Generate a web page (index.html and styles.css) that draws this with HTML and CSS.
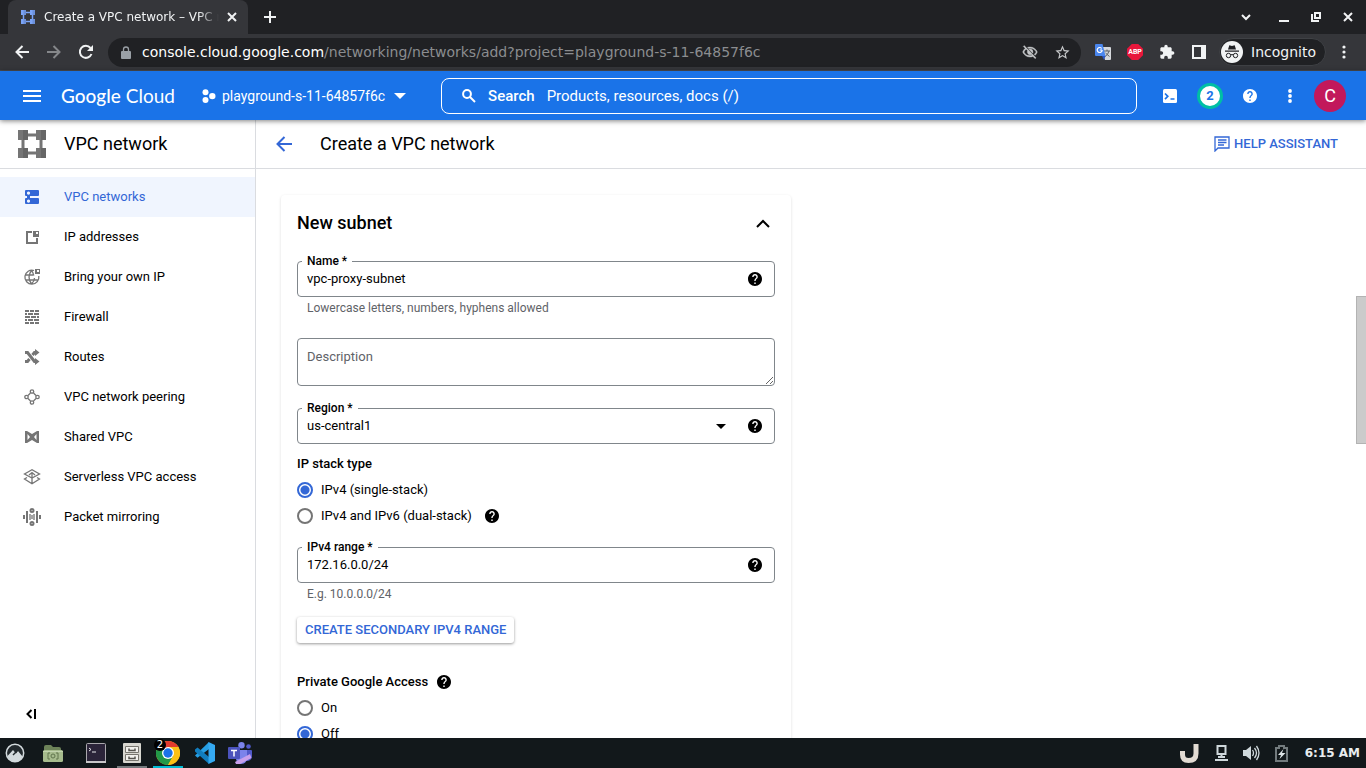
FILE: index.html
```html
<!DOCTYPE html>
<html lang="en">
<head>
<meta charset="utf-8">
<title>Create a VPC network – VPC network</title>
<link rel="stylesheet" href="styles.css">
</head>
<body>
<svg class="sprite" aria-hidden="true">
  <symbol id="help" viewBox="2 2 20 20"><path d="M12 2C6.480 2 2 6.480 2 12s4.480 10 10 10 10-4.480 10-10S17.520 2 12 2zm1 17h-2v-2h2v2zm2.070-7.750l-.9.920C13.450 12.900 13 13.500 13 15h-2v-.5c0-1.100.450-2.100 1.170-2.830l1.240-1.260c.370-.360.590-.860.590-1.410 0-1.100-.9-2-2-2s-2 .9-2 2H8c0-2.210 1.790-4 4-4s4 1.790 4 4c0 .880-.360 1.680-.930 2.250z" stroke="none"/></symbol>
  <symbol id="vpc" viewBox="0 0 28 28"><path d="M10 5h8M10 23h8M5 10v8M23 10v8" stroke="currentColor" stroke-width="3"/><path d="M0 0h10v10H0zM18 0h10v10H18zM0 18h10v10H0zM18 18h10v10H18z"/><path d="M5 0h5v10H5zM23 0h5v10h-5zM5 18h5v10H5zM23 18h5v10h-5z" fill="#000" opacity=".12"/></symbol>
</svg>

<header class="browser">
  <div class="tabstrip">
    <div class="tab">
      <svg class="favicon" width="14" height="14"><use href="#vpc"/></svg>
      <span class="tab-title">Create a VPC network – VPC network</span>
      <button class="icon-btn tab-close" aria-label="Close tab"><svg width="10" height="10" viewBox="0 0 10 10"><path class="line" d="M1 1l8 8M9 1L1 9"/></svg></button>
    </div>
    <button class="icon-btn new-tab" aria-label="New tab"><svg width="12" height="12" viewBox="0 0 12 12"><path class="line" d="M6 0v12M0 6h12"/></svg></button>
    <div class="window-controls">
      <button class="icon-btn w-search" aria-label="Search tabs"><svg width="10" height="7" viewBox="0 0 10 7"><path class="line" d="M1 1l4 4 4-4"/></svg></button>
      <button class="icon-btn" aria-label="Minimize"><svg width="10" height="10" viewBox="0 0 10 10"><path d="M0 8h10v2H0z"/></svg></button>
      <button class="icon-btn" aria-label="Restore"><svg width="10" height="10" viewBox="0 0 10 10"><path class="line" d="M4 1h5v5H4zM1 2v7h7"/></svg></button>
      <button class="icon-btn" aria-label="Close window"><svg width="10" height="10" viewBox="0 0 10 10"><path class="line" d="M1 1l8 8M9 1L1 9"/></svg></button>
    </div>
  </div>
  <div class="toolbar">
    <button class="icon-btn" aria-label="Back"><svg width="14" height="14" viewBox="0 0 14 14"><path class="line" d="M14 7H2M7.500 1L1.500 7l6 6"/></svg></button>
    <button class="icon-btn dim" aria-label="Forward"><svg width="14" height="14" viewBox="0 0 14 14"><path class="line" d="M0 7h12M6.500 1l6 6-6 6"/></svg></button>
    <button class="icon-btn" aria-label="Reload"><svg width="16" height="16" viewBox="0 0 16 16"><path class="line" d="M13.500 10A6 6 0 1 1 12.500 4"/><path d="M15 1v6H9z"/></svg></button>
    <div class="omnibox">
      <svg class="lock" width="10" height="13" viewBox="0 0 10 13"><path d="M1 5h8q1 0 1 1v6q0 1-1 1H1q-1 0-1-1V6q0-1 1-1z"/><path class="thin" d="M2.500 5V3.500a2.500 2.500 0 0 1 5 0V5"/></svg>
      <span class="url">console.cloud.google.com<span class="path">/networking/networks/add?project=playground-s-11-64857f6c</span></span>
      <svg width="16" height="16" viewBox="0 0 24 24"><path d="M12 6.500c4.300 0 7.700 2.400 9.300 5.500-.7 1.400-1.700 2.600-3 3.500l1.400 1.400C21.200 15.600 22.400 13.900 23 12 21.300 7.600 17 4.500 12 4.500c-1.300 0-2.600.2-3.800.6l1.700 1.700c.7-.2 1.400-.3 2.100-.3zM2 3.700l2.800 2.800C3 7.900 1.700 9.800 1 12c1.700 4.400 6 7.500 11 7.500 1.500 0 3-.3 4.400-.8l3.300 3.300 1.300-1.300L3.300 2.400zm4.200 4.200l2 2A4.500 4.500 0 0 0 14.100 15.800l.8.900c-4.800 2-10-.3-11.900-4.700.7-1.600 1.800-3 3.200-4.100zM12 7.500a4.500 4.500 0 0 1 4.500 4.500c0 .6-.1 1.200-.3 1.700L10.300 7.800c.5-.2 1.100-.3 1.700-.3z" stroke="currentColor" stroke-width=".6"/></svg>
      <svg width="17" height="17" viewBox="0 0 24 24"><path d="M22 9.240l-7.190-.62L12 2 9.190 8.630 2 9.240l5.460 4.730L5.820 21 12 17.270 18.180 21l-1.630-7.030L22 9.240zM12 15.400l-3.760 2.270 1-4.280-3.320-2.880 4.380-.38L12 6.100l1.710 4.040 4.380.38-3.320 2.880 1 4.280L12 15.400z"/></svg>
    </div>
    <button class="icon-btn" aria-label="Translate"><svg width="16" height="16" viewBox="0 0 16 16"><path d="M6 3h9q1 0 1 1v11q0 1-1 1h-5z" fill="#d5d8dc"/><path d="M9 7h6M12 5.500V7M14 7q-1 4-4 5.500M10.500 9l4 3.500" fill="none" stroke="#5f6368"/><path d="M1 0h6.500l3 12H1q-1 0-1-1V1q0-1 1-1z" fill="#4a86ee"/><path d="M7 12h3.500L9 16z" fill="#2a56c6"/><path d="M7 6H4.800M6.700 4.500A2.500 2.500 0 1 0 7.200 6" fill="none" stroke="#fff" stroke-width="1.200"/></svg></button>
    <button class="icon-btn" aria-label="Adblock Plus"><span class="abp">ABP</span></button>
    <button class="icon-btn" aria-label="Extensions"><svg width="16" height="16" viewBox="0 0 24 24"><path d="M20.500 11H19V7c0-1.100-.9-2-2-2h-4V3.500C13 2.120 11.880 1 10.500 1S8 2.120 8 3.500V5H4c-1.100 0-1.990.9-1.990 2v3.800H3.500c1.490 0 2.700 1.210 2.700 2.700s-1.210 2.700-2.700 2.700H2V20c0 1.100.9 2 2 2h3.800v-1.500c0-1.490 1.210-2.700 2.700-2.700 1.490 0 2.700 1.210 2.700 2.700V22H17c1.100 0 2-.9 2-2v-4h1.500c1.380 0 2.500-1.120 2.500-2.500S21.880 11 20.500 11z"/></svg></button>
    <button class="icon-btn" aria-label="Side panel"><svg width="14" height="14" viewBox="0 0 14 14"><path fill-rule="evenodd" d="M0 0h14v14H0zM2 2v10h7V2z"/></svg></button>
    <button class="incognito"><svg width="22" height="22" viewBox="0 0 22 22"><circle cx="11" cy="11" r="11" fill="#f1f3f4"/><path d="M7 8.500l1.300-4.200 2.700.6 2.700-.6L15 8.500zM4 9.500h14v1.200H4z" fill="#202124"/><g fill="none" stroke="#202124"><circle cx="7.500" cy="14.500" r="2.200"/><circle cx="14.500" cy="14.500" r="2.200"/><path d="M9.500 14q1.500-1 3 0"/></g></svg>Incognito</button>
    <button class="icon-btn menu" aria-label="Browser menu"><svg width="4" height="14" viewBox="0 0 4 14"><circle cx="2" cy="2" r="1.600"/><circle cx="2" cy="7" r="1.600"/><circle cx="2" cy="12" r="1.600"/></svg></button>
  </div>
</header>

<header class="cloud-bar">
  <button class="icon-btn hamburger" aria-label="Main menu"><svg width="18" height="12" viewBox="0 0 18 12"><path d="M0 0h18v2H0zM0 5h18v2H0zM0 10h18v2H0z"/></svg></button>
  <a class="logo" href="#"><span class="logo-strong">Google</span> Cloud</a>
  <button class="project"><svg width="14" height="14" viewBox="0 0 14 14"><circle cx="3.500" cy="3.200" r="3"/><circle cx="3.500" cy="10.900" r="3"/><circle cx="10.300" cy="7.100" r="3.200"/></svg><span>playground-s-11-64857f6c</span><svg class="caret" width="12" height="6" viewBox="0 0 12 6"><path d="M0 0h12L6 6z"/></svg></button>
  <label class="search">
    <svg width="14" height="14" viewBox="0 0 14 14"><circle class="line" cx="5" cy="5" r="3.900"/><path class="line" d="M8 8l5 5"/></svg>
    <span class="search-label">Search</span>
    <input type="search" placeholder="Products, resources, docs (/)">
  </label>
  <div class="tools">
    <button class="icon-btn" aria-label="Cloud Shell"><svg width="14" height="14" viewBox="0 0 14 14"><rect width="14" height="14" rx="1.500"/><path d="M2 4.500L4.800 7.300 2 10.200M7.500 10h4" fill="none" stroke="#1a73e8" stroke-width="1.700"/></svg></button>
    <button class="icon-btn" aria-label="Notifications"><span class="count">2</span></button>
    <button class="icon-btn" aria-label="Help"><svg width="14" height="14"><use href="#help"/></svg></button>
    <button class="icon-btn" aria-label="Settings"><svg width="4" height="14" viewBox="0 0 4 14"><circle cx="2" cy="2" r="1.900"/><circle cx="2" cy="7" r="1.900"/><circle cx="2" cy="12" r="1.900"/></svg></button>
    <button class="icon-btn" aria-label="Account"><span class="avatar">C</span></button>
  </div>
</header>

<div class="workspace">
  <aside class="sidebar">
    <div class="bar"><svg class="product" width="28" height="28"><use href="#vpc"/></svg><h2>VPC network</h2></div>
    <nav class="nav">
      <a class="active" href="#"><svg width="18" height="18" viewBox="0 0 18 18"><path fill-rule="evenodd" d="M3 2h12q1 0 1 1v4q0 1-1 1H7v2h8q1 0 1 1v4q0 1-1 1H3q-1 0-1-1v-4q0-1 1-1h1V8H3Q2 8 2 7V3q0-1 1-1zM5.500 3.500a1.600 1.600 0 1 0 .01 0zM5.500 11.500a1.600 1.600 0 1 0 .01 0z"/></svg>VPC networks</a>
      <a href="#"><svg width="18" height="18" viewBox="0 0 18 18"><path class="line" d="M9 4H4v11h10v-5"/><path fill-rule="evenodd" d="M10 3h6v6h-6zM13 4v2h2V4z"/></svg>IP addresses</a>
      <a href="#"><svg width="18" height="18" viewBox="0 0 18 18"><path class="thin" d="M11 2.500A7 7 0 1 0 15.800 8M2.500 7h8M2.500 12h13M8.500 2.500q-5 6.500 0 13.500M8.500 2.500q1.800 2 2.300 5M11.500 10q0 3-3 6"/><path fill-rule="evenodd" d="M12 1h5v5h-5zM14 2v2h2V2z"/></svg>Bring your own IP</a>
      <a href="#"><svg width="18" height="18" viewBox="0 0 18 18"><path d="M2 2h4v2H2zM7 2h4v2H7zM12 2h4v2h-4zM2 5h2v2H2zM5 5h5v2H5zM11 5h5v2h-5zM2 8h5v2H2zM8 8h5v2H8zM14 8h2v2h-2zM2 11h2v2H2zM5 11h5v2H5zM11 11h5v2h-5zM2 14h4v2H2zM7 14h4v2H7zM12 14h4v2h-4z"/></svg>Firewall</a>
      <a href="#"><svg width="18" height="18" viewBox="0 0 18 18"><path class="bold" d="M2 4.500h2.500l7 9H13M2 13.500h2.500l2-2.500M9.500 7l2-2.500H13"/><path d="M12 1l4.500 3.500L12 8zM12 10l4.500 3.500L12 17z"/></svg>Routes</a>
      <a href="#"><svg width="18" height="18" viewBox="0 0 18 18"><g class="thin"><circle cx="9" cy="3.500" r="1.700"/><circle cx="3.500" cy="9" r="1.700"/><circle cx="14.500" cy="9" r="1.700"/><circle cx="9" cy="14.500" r="1.700"/><path d="M7.500 5L5 7.500M10.500 5L13 7.500M5 10.500L7.500 13M13 10.500L10.500 13"/></g></svg>VPC network peering</a>
      <a href="#"><svg width="18" height="18" viewBox="0 0 18 18"><path fill-rule="evenodd" d="M2 3h2l5 3 5-3h2v12h-2l-5-3-5 3H2zM4.500 6v6L7 9zM13.500 6v6L11 9z"/></svg>Shared VPC</a>
      <a href="#"><svg width="18" height="18" viewBox="0 0 18 18"><path class="thin" d="M5 4L1.500 6 9 10 16.500 6 9 1.800 5 4M4 9.500L1.500 11 9 15.800l7.500-4.800L14 9.500M9 4.500V15M6 7l3-2.500L12 7"/></svg>Serverless VPC access</a>
      <a href="#"><svg width="18" height="18" viewBox="0 0 18 18"><path class="line" d="M4 3v12M14 3v12M1 7v4M17 7v4"/><g class="line"><circle cx="9" cy="2.500" r="1.500"/><circle cx="9" cy="15.500" r="1.500"/></g><path class="thin" d="M7 6v6M11 6v6M9 7v4"/></svg>Packet mirroring</a>
    </nav>
    <button class="icon-btn collapse" aria-label="Collapse menu"><svg width="10" height="10" viewBox="0 0 10 10"><path class="line" d="M5.500 1L1.500 5l4 4M9 0v10"/></svg></button>
  </aside>

  <main class="main">
    <div class="bar">
      <button class="icon-btn back" aria-label="Back to networks"><svg width="16" height="16" viewBox="0 0 16 16"><path class="line" d="M16 8H2M8.500 1L1.500 8l7 7"/></svg></button>
      <h1>Create a VPC network</h1>
      <button class="assist"><svg width="16" height="16" viewBox="0 0 16 16"><path class="thin" d="M1 15V1h14v11H4z"/><path class="thin" d="M4 4h8.500M4 6.500h8.500M4 9h6"/></svg>HELP ASSISTANT</button>
    </div>
    <div class="scroll">
      <form class="card">
        <div class="card-head"><h3>New subnet</h3><button type="button" class="icon-btn" aria-label="Collapse subnet"><svg width="14" height="9" viewBox="0 0 14 9"><path class="line" d="M1 8l6-6 6 6"/></svg></button></div>

        <div class="field">
          <label for="name">Name *</label>
          <input id="name" type="text" value="vpc-proxy-subnet">
          <button type="button" class="icon-btn" aria-label="Name help"><svg width="14" height="14"><use href="#help"/></svg></button>
        </div>
        <p class="hint">Lowercase letters, numbers, hyphens allowed</p>

        <textarea class="description" aria-label="Description" placeholder="Description"></textarea>

        <div class="field">
          <label for="region">Region *</label>
          <select id="region"><option>us-central1</option></select>
          <svg class="caret" width="10" height="5" viewBox="0 0 10 5"><path d="M0 0h10L5 5z"/></svg>
          <button type="button" class="icon-btn" aria-label="Region help"><svg width="14" height="14"><use href="#help"/></svg></button>
        </div>

        <fieldset class="stack">
          <legend>IP stack type</legend>
          <div class="option"><input type="radio" id="v4" name="stack" checked><label for="v4">IPv4 (single-stack)</label></div>
          <div class="option"><input type="radio" id="v46" name="stack"><label for="v46">IPv4 and IPv6 (dual-stack)</label><button type="button" class="icon-btn" aria-label="Stack help"><svg width="14" height="14"><use href="#help"/></svg></button></div>
        </fieldset>

        <div class="field range">
          <label for="range">IPv4 range *</label>
          <input id="range" type="text" value="172.16.0.0/24">
          <button type="button" class="icon-btn" aria-label="Range help"><svg width="14" height="14"><use href="#help"/></svg></button>
        </div>
        <p class="hint">E.g. 10.0.0.0/24</p>

        <button type="button" class="raised">CREATE SECONDARY IPV4 RANGE</button>

        <fieldset class="access">
          <legend>Private Google Access<button type="button" class="icon-btn" aria-label="Private access help"><svg width="14" height="14"><use href="#help"/></svg></button></legend>
          <div class="option"><input type="radio" id="on" name="access"><label for="on">On</label></div>
          <div class="option"><input type="radio" id="off" name="access" checked><label for="off">Off</label></div>
        </fieldset>
      </form>
    </div>
    <div class="thumb"></div>
  </main>
</div>

<footer class="taskbar">
  <button class="task" aria-label="Applications"><svg width="20" height="20" viewBox="0 0 20 20"><circle cx="10" cy="10" r="8.700" fill="#22292d" stroke="#d3dadd" stroke-width="1.500"/><path d="M2.500 13L8 7l3 3.500L13 8l4.500 5.500A8 8 0 0 1 2.500 13z" fill="#d3dadd"/><path d="M8 12l4-4" stroke="#22292d" stroke-width="1.500"/></svg></button>
  <button class="task files" aria-label="Files"><svg width="20" height="18" viewBox="0 0 20 18"><path d="M1 3q0-2 2-2h5l2 2h6q2 0 2 2v6H1z" fill="#6d8359"/><rect y="6" width="20" height="12" rx="1.500" fill="#a6bb8d"/><path d="M0 7.500h20" stroke="#c2d3ae"/><path d="M7 9H5v6h2M13 9h2v6h-2" fill="none" stroke="#60754d"/><circle cx="10" cy="12" r="2" fill="none" stroke="#60754d"/></svg></button>
  <button class="task" aria-label="Terminal"><svg width="20" height="20" viewBox="0 0 20 20"><rect x=".5" y=".5" width="19" height="18.500" rx="1" fill="#2b2439" stroke="#aaa8ad"/><path d="M0 19h20" stroke="#c9c6c9" stroke-width="2"/><path d="M3 5l2 1.500L3 8M6 9h4" fill="none" stroke="#e7e7eb"/></svg></button>
  <button class="task open" aria-label="File cabinet"><svg width="18" height="20" viewBox="0 0 18 20"><rect width="18" height="20" rx="1" fill="#d8d7d0"/><path d="M2.500 3.500h13v6h-13zM2.500 11.500h13v6h-13z" fill="#f1f0ec" stroke="#77756e"/><path d="M6 5.500v2h6v-2M6 13.500v2h6v-2" fill="none" stroke="#55534e" stroke-width="1.500"/></svg></button>
  <button class="task current" aria-label="Chrome"><svg width="24" height="24" viewBox="0 0 24 24"><circle cx="12" cy="12" r="12" fill="#fbc116"/><path d="M12 12L1.600 6A12 12 0 0 1 22.400 6z" fill="#e33b2e"/><path d="M1.600 6A12 12 0 0 0 12 24l5.200-9L12 12z" fill="#229848"/><path d="M22.400 6H12v6l5.200 3L12 24A12 12 0 0 0 22.400 6z" fill="#fbc116"/><circle cx="12" cy="12" r="6" fill="#fff"/><circle cx="12" cy="12" r="4.700" fill="#1a73e8"/></svg><span class="badge">2</span></button>
  <button class="task" aria-label="Code editor"><svg width="22" height="22" viewBox="0 0 22 22"><path d="M16 0l-14 13.500 2.500 2.300L16 7z" fill="#269ee3"/><path d="M2 7.500l2.500-2L16 15v7L2 9.500z" fill="#117dbe"/><path d="M15.500 0L22 3v16l-6.500 3z" fill="#35aaf2"/></svg></button>
  <button class="task" aria-label="Teams"><svg width="24" height="22" viewBox="0 0 24 22"><circle cx="13.500" cy="3.300" r="3.200" fill="#7b83eb"/><circle cx="20.500" cy="4.500" r="2.300" fill="#5059c9"/><path d="M16 8h7q1 0 1 1v6q-1 4-5 4h-3z" fill="#5059c9"/><path d="M8 8h11v9q-1 5-6 5-4 0-5-5z" fill="#7b83eb"/><rect y="5" width="12" height="12" rx="1" fill="#4b53bc"/><path d="M3 8.500h6M6 8.500v6" stroke="#fff" stroke-width="1.500"/><path d="M7 20L22 12l1.500 4L12 22H8z" fill="#c8a0ec"/></svg></button>
  <div class="tray">
    <svg width="20" height="20" viewBox="0 0 20 20"><path d="M2.500 8v3.500q0 6 6 6 7.500 0 7.500-7V1" fill="none" stroke="#e2dbd3" stroke-width="5"/></svg>
    <svg width="13" height="17" viewBox="0 0 13 17"><path d="M2.500 1h8v8h-8z" fill="none" stroke="#cfd8dc" stroke-width="2"/><path d="M5.500 9h2v3h-2zM3 11h7v2H3zM0 14h13v2H0z" fill="#cfd8dc"/></svg>
    <svg width="17" height="16" viewBox="0 0 17 16"><path d="M0 5h3l5-4v14l-5-4H0z" fill="#cfd8dc"/><path d="M9.500 5q2 3 0 6M11.500 3q4 5 0 10M13.500 1q5 7 0 14" fill="none" stroke="#cfd8dc" stroke-width="1.300"/></svg>
    <svg width="13" height="17" viewBox="0 0 13 17"><path d="M1 3h3V1h5v2h3v13H1z" fill="none" stroke="#727a7d" stroke-width="2"/><path d="M8.500 4L3 10h3l-1.500 4 6-6H7z" fill="#dce3e5"/></svg>
    <time>6:15 AM</time>
  </div>
</footer>
</body>
</html>
```
FILE: styles.css
```css
* { box-sizing: border-box; }
html, body { height: 100%; }
body {
  margin: 0;
  display: flex;
  flex-direction: column;
  overflow: hidden;
  background: #fff;
  color: #000;
  font: 13px/20px Roboto, sans-serif;
}
svg { display: block; flex: none; fill: currentColor; }
button, input, select, textarea { font: inherit; color: inherit; }
button { background: none; border: 0; padding: 0; }
a { color: inherit; text-decoration: none; }
h1, h2, h3, p { margin: 0; font-weight: 400; }
.sprite { position: absolute; width: 0; height: 0; }
.line, .thin, .bold { fill: none; stroke: currentColor; stroke-width: 2; }
.thin { stroke-width: 1.3; }
.bold { stroke-width: 3; }
.icon-btn { display: flex; align-items: center; justify-content: center; flex: none; }

/* Browser chrome */
.browser { flex: none; background: #202124; color: #f1f3f4; font-family: "DejaVu Sans", sans-serif; }
.tabstrip { height: 34px; display: flex; align-items: center; padding-left: 8px; }
.tab {
  width: 240px;
  height: 34px;
  display: flex;
  align-items: center;
  padding: 0 11px 0 13px;
  background: #35363a;
  border-radius: 8px 8px 0 0;
}
.favicon { color: #7ba4f7; }
.tab-title {
  flex: 1;
  margin-left: 9px;
  overflow: hidden;
  white-space: nowrap;
  font-size: 12px;
  mask-image: linear-gradient(to right, #000 88%, transparent);
}
.tab-close { width: 10px; margin-left: 8px; }
.new-tab { width: 44px; height: 34px; }
.window-controls { margin-left: auto; display: flex; align-items: center; padding-right: 2px; }
.window-controls .icon-btn { width: 32px; height: 34px; }
.window-controls .w-search { width: 44px; }
.toolbar {
  height: 37px;
  display: flex;
  align-items: center;
  padding: 0 8px 0 6px;
  background: #35363a;
  border-bottom: 1px solid #4a4b50;
}
.toolbar .icon-btn { width: 32px; height: 32px; }
.toolbar .menu { width: 28px; margin-left: 4px; }
.toolbar .dim { color: #85878a; }
.omnibox {
  flex: 1;
  height: 29px;
  display: flex;
  align-items: center;
  gap: 16px;
  margin: 0 6px;
  padding: 0 10px 0 13px;
  border-radius: 16px;
  background: #202124;
  color: #c6c8ca;
}
.lock { color: #9aa0a6; }
.url { flex: 1; margin-left: -5px; font-size: 14px; color: #fff; white-space: nowrap; }
.path { color: #8b8d90; }
.abp {
  width: 16px;
  height: 16px;
  background: #e8173b;
  clip-path: polygon(30% 0, 70% 0, 100% 30%, 100% 70%, 70% 100%, 30% 100%, 0 70%, 0 30%);
  color: #fff;
  font: bold 7px/16px Roboto, sans-serif;
  text-align: center;
}
.incognito {
  height: 28px;
  display: flex;
  align-items: center;
  gap: 8px;
  padding: 0 9px 0 1px;
  margin-left: 4px;
  border-radius: 14px;
  background: #202124;
  border: 1px solid #3f4145;
  font-size: 14px;
}

/* Cloud header */
.cloud-bar {
  flex: none;
  z-index: 1;
  height: 49px;
  display: flex;
  align-items: center;
  padding: 0 16px 0 12px;
  background: #1a73e8;
  color: #fff;
  box-shadow: 0 1px 5px rgba(0, 0, 0, .5);
}
.hamburger { width: 40px; height: 40px; }
.logo { width: 117px; margin-left: 9px; font: 19px/26px Lato, sans-serif; white-space: nowrap; }
.logo-strong { font-weight: 500; }
.project { display: flex; align-items: center; gap: 6px; margin-left: 24px; font-size: 14px; }
.project .caret { margin-left: 3px; }
.search {
  flex: 1;
  height: 36px;
  display: flex;
  align-items: center;
  gap: 12px;
  margin: 0 13px 0 35px;
  padding: 0 20px;
  border: 1px solid #fff;
  border-radius: 8px;
  font-size: 15px;
}
.search-label { font-weight: 500; }
.search input { flex: 1; padding: 0; border: 0; outline: 0; background: none; }
.search input::placeholder { color: #fff; }
.tools { display: flex; }
.tools .icon-btn { width: 40px; height: 40px; }
.count {
  width: 26px;
  height: 26px;
  border: 3px solid #00bfa5;
  border-radius: 50%;
  background: #fff;
  color: #1a73e8;
  font-weight: 700;
}
.avatar { width: 32px; height: 32px; border-radius: 50%; background: #c2185b; font-size: 18px; line-height: 32px; }

/* Workspace */
.workspace { flex: 1; min-height: 0; display: flex; }
.sidebar { width: 256px; flex: none; display: flex; flex-direction: column; border-right: 1px solid #dadce0; }
.bar { flex: none; height: 49px; display: flex; align-items: center; border-bottom: 1px solid #dadce0; }
.bar h1, .bar h2 { font-size: 18px; line-height: 24px; }
.product { margin: 0 18px; color: #757575; }
.nav { flex: 1; padding-top: 8px; }
.nav a { height: 40px; display: flex; align-items: center; gap: 23px; padding-left: 23px; }
.nav svg { color: #757575; }
.nav .active { background: #f0f5fe; color: #3367d6; }
.nav .active svg { color: inherit; }
.collapse { width: 40px; height: 40px; margin: 0 0 4px 11px; }
.main { position: relative; flex: 1; min-width: 0; display: flex; flex-direction: column; }
.main .bar { padding: 0 28px 0 16px; }
.back { width: 24px; height: 24px; margin-right: 24px; color: #3367d6; }
.assist { display: flex; align-items: center; gap: 4px; margin-left: auto; color: #3367d6; font-weight: 500; }
.scroll { flex: 1; min-height: 0; overflow: hidden; padding: 26px 25px 0; }
.thumb { position: absolute; top: 176px; right: 0; width: 10px; height: 148px; background: #cbcbcb; border: 1px solid #b3b3b3; border-right: 0; }

/* Subnet form */
.card {
  max-width: 510px;
  padding: 16px 16px 24px;
  border-radius: 4px;
  box-shadow: 0 1px 3px rgba(0, 0, 0, .14);
}
.card-head { display: flex; align-items: center; justify-content: space-between; margin-bottom: 26px; }
.card-head h3 { font-size: 18px; line-height: 24px; font-weight: 500; }
.card-head .icon-btn { width: 24px; height: 24px; }
.field {
  position: relative;
  height: 36px;
  display: flex;
  align-items: center;
  padding: 0 12px 0 9px;
  border: 1px solid #80868b;
  border-radius: 4px;
}
.field label {
  position: absolute;
  top: -9px;
  left: 4px;
  padding: 0 5px;
  background: #fff;
  font-size: 12px;
  line-height: 16px;
  font-weight: 500;
}
.field input, .field select { flex: 1; min-width: 0; padding: 0; border: 0; outline: 0; background: none; appearance: none; }
.field .caret { margin-right: 22px; }
.hint { margin: 3px 10px 0; color: #5f6368; font-size: 12px; line-height: 16px; }
.description {
  display: block;
  width: 100%;
  height: 48px;
  margin: 22px 0;
  padding: 8px 9px;
  border: 1px solid #80868b;
  border-radius: 4px;
  outline: 0;
  resize: vertical;
}
.description::placeholder { color: #5f6368; }
fieldset { min-width: 0; margin: 0; padding: 0; border: 0; }
legend { display: flex; align-items: center; gap: 9px; padding: 0; margin-bottom: 5px; line-height: 16px; font-weight: 500; }
.stack { margin: 12px 0 18px; }
.option { height: 26px; display: flex; align-items: center; }
.option label { padding: 0 13px 0 8px; }
.option input {
  appearance: none;
  width: 16px;
  height: 16px;
  margin: 0;
  border: 2px solid #757575;
  border-radius: 50%;
}
.option input:checked { border-color: #3367d6; background: radial-gradient(circle, #3367d6 4px, transparent 5px); }
.raised {
  height: 26px;
  margin: 15px 0 31px;
  padding: 0 8px;
  border-radius: 3px;
  box-shadow: 0 1px 3px rgba(0, 0, 0, .4);
  color: #3367d6;
  font-weight: 500;
}

/* Desktop taskbar */
.taskbar { flex: none; height: 30px; display: flex; background: #12181b; color: #e8ecee; }
.task { position: relative; width: 30px; margin-right: 6px; display: flex; align-items: center; justify-content: center; }
.task.files { margin: 0 13px 0 2px; }
.open { box-shadow: inset 0 -2px #73797c; }
.current { box-shadow: inset 0 -2px #00bcd4; }
.badge {
  position: absolute;
  top: 1px;
  left: 1px;
  width: 12px;
  height: 12px;
  border-radius: 50%;
  background: #000;
  color: #fff;
  font: 10px/12px "DejaVu Sans", sans-serif;
}
.tray { margin-left: auto; display: flex; align-items: center; gap: 15px; padding-right: 6px; }
.tray time { margin-left: 2px; font: bold 12px/20px "DejaVu Sans", sans-serif; }
```
